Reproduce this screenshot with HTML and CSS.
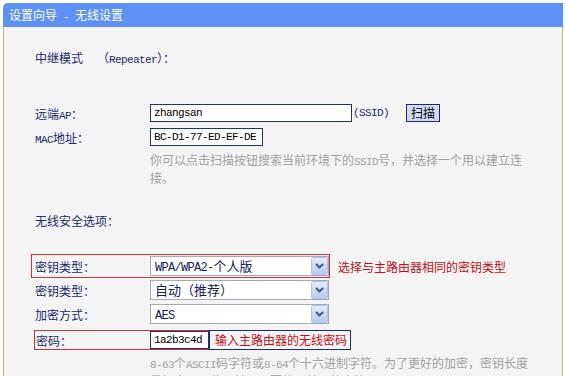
FILE: index.html
```html
<!DOCTYPE html>
<html lang="zh-CN">
<head>
<meta charset="utf-8">
<title>设置向导 - 无线设置</title>
<link rel="stylesheet" href="styles.css">
</head>
<body>
<div class="panel">
  <div class="title">设置向导<span class="en"> - </span>无线设置</div>
  <div class="content">
    <p class="mode">中继模式<span class="paren">（<span class="en">Repeater</span>）：</span></p>

    <div class="group">
      <div class="row">
        <span class="label">远端<span class="en">AP</span>：</span>
        <input class="text ssid" type="text" value="zhangsan">
        <span class="en unit">(SSID)</span>
        <button class="btn" type="button">扫描</button>
      </div>
      <div class="row">
        <span class="label"><span class="en">MAC</span>地址：</span>
        <input class="text mac" type="text" value="BC-D1-77-ED-EF-DE">
      </div>
      <p class="help">你可以点击扫描按钮搜索当前环境下的<span class="en">SSID</span>号，并选择一个用以建立连<br>接。</p>
    </div>

    <p class="section">无线安全选项：</p>

    <div class="sec">
      <div class="row">
        <div class="mark">
          <span class="label">密钥类型：</span>
          <div class="select"><span class="val"><span class="en">WPA/WPA2-</span>个人版</span><span class="arrow"><svg width="9" height="6" viewBox="0 0 9 6"><path d="M1 1 L4.5 4.5 L8 1" fill="none" stroke="#4a6290" stroke-width="2.2"/></svg></span></div>
        </div>
        <span class="note">选择与主路由器相同的密钥类型</span>
      </div>
      <div class="row">
        <span class="label">密钥类型：</span>
        <div class="select"><span class="val">自动（推荐）</span><span class="arrow"><svg width="9" height="6" viewBox="0 0 9 6"><path d="M1 1 L4.5 4.5 L8 1" fill="none" stroke="#4a6290" stroke-width="2.2"/></svg></span></div>
      </div>
      <div class="row">
        <span class="label">加密方式：</span>
        <div class="select"><span class="val"><span class="en">AES</span></span><span class="arrow"><svg width="9" height="6" viewBox="0 0 9 6"><path d="M1 1 L4.5 4.5 L8 1" fill="none" stroke="#4a6290" stroke-width="2.2"/></svg></span></div>
      </div>
      <div class="pwrow">
        <div class="pwmark">
          <span class="label">密码：</span>
          <input class="text pw" type="text" value="1a2b3c4d">
        </div>
        <span class="hint">输入主路由器的无线密码</span>
      </div>
      <p class="help help2"><span class="en">8-63</span>个<span class="en">ASCII</span>码字符或<span class="en">8-64</span>个十六进制字符。为了更好的加密，密钥长度<br>最好大于<span class="en">12</span>位，并且不要使用单一的字符。</p>
    </div>
  </div>
</div>
</body>
</html>
```

FILE: styles.css
```css
* {
  box-sizing: border-box;
}

html,
body {
  margin: 0;
  background: #ffffff;
}

body {
  font-family: "Noto Sans CJK SC", sans-serif;
  font-size: 12px;
  color: #1b2a6b;
}

.en {
  font-family: "Liberation Mono", monospace;
  font-size: 11px;
  letter-spacing: -0.6px;
  line-height: 1;
}

.panel {
  margin: 3px 0 0 3px;
  width: 560px;
}

.title {
  height: 24px;
  line-height: 24px;
  background: #5e91f8;
  color: #ffffff;
  padding-left: 6px;
  border-top-left-radius: 5px;
}

.content {
  background: #f4f4f4;
  border-left: 1px solid #dcae6c;
  border-right: 1px solid #dcae6c;
  padding: 22px 0 20px 31px;
}

.mode {
  margin: 0;
  line-height: 18px;
}

.paren {
  margin-left: 14px;
}

.group {
  margin-top: 34px;
}

.row {
  display: flex;
  align-items: center;
  height: 24px;
}

.label {
  flex: none;
  width: 115px;
}

.text {
  flex: none;
  height: 18px;
  margin: 0;
  border: 1px solid #1f3463;
  background: #ffffff;
  padding: 0 3px;
  color: #000000;
  font-family: "Liberation Mono", monospace;
  font-size: 11px;
  letter-spacing: -0.6px;
  outline: none;
}

.ssid {
  width: 202px;
}

.mac {
  width: 113px;
}

.unit {
  margin-left: 1px;
}

.btn {
  margin: 0 0 0 17px;
  width: 34px;
  height: 18px;
  padding: 0;
  border: 1px solid #1d2a5c;
  background: #d1d9f6;
  color: #000000;
  font-family: "Noto Sans CJK SC", sans-serif;
  font-size: 12px;
  line-height: 16px;
}

.help {
  margin: 2px 0 0 115px;
  line-height: 18px;
  color: #a2a2a2;
}

.section {
  margin: 25px 0 0;
  line-height: 18px;
}

.sec {
  margin-top: 24px;
}

.mark {
  display: flex;
  align-items: center;
  height: 24px;
  margin-left: -4px;
  padding-left: 3px;
  border: 1px solid #c8323c;
}

.select {
  display: flex;
  align-items: center;
  width: 179px;
  height: 20px;
  border: 1px solid #a5aab5;
  background: #ffffff;
  font-size: 13px;
  color: #14205a;
}

.select .en {
  font-size: 12px;
  letter-spacing: -0.7px;
}

.val {
  flex: 1;
  padding-left: 4px;
  line-height: 18px;
}

.arrow {
  display: flex;
  align-items: center;
  justify-content: center;
  width: 17px;
  height: 18px;
  border: 1px solid #b3c4e8;
  border-radius: 2px;
  background: linear-gradient(#e4ecfb, #bacbef);
}

.note {
  margin-left: 8px;
  color: #c40e1a;
}

.pwrow {
  display: flex;
  align-items: center;
  height: 20px;
  margin-top: 4px;
}

.pwmark {
  display: flex;
  align-items: center;
  height: 20px;
  margin-left: -1px;
  border: 1px solid #c8323c;
}

.pwmark .label {
  padding-left: 1px;
}

.pw {
  width: 59px;
  margin-right: -1px;
}

.hint {
  height: 20px;
  width: 142px;
  padding-left: 5px;
  line-height: 18px;
  border: 1px solid #1a2e66;
  color: #c40e1a;
}

.help2 {
  margin-top: 4px;
}
```
